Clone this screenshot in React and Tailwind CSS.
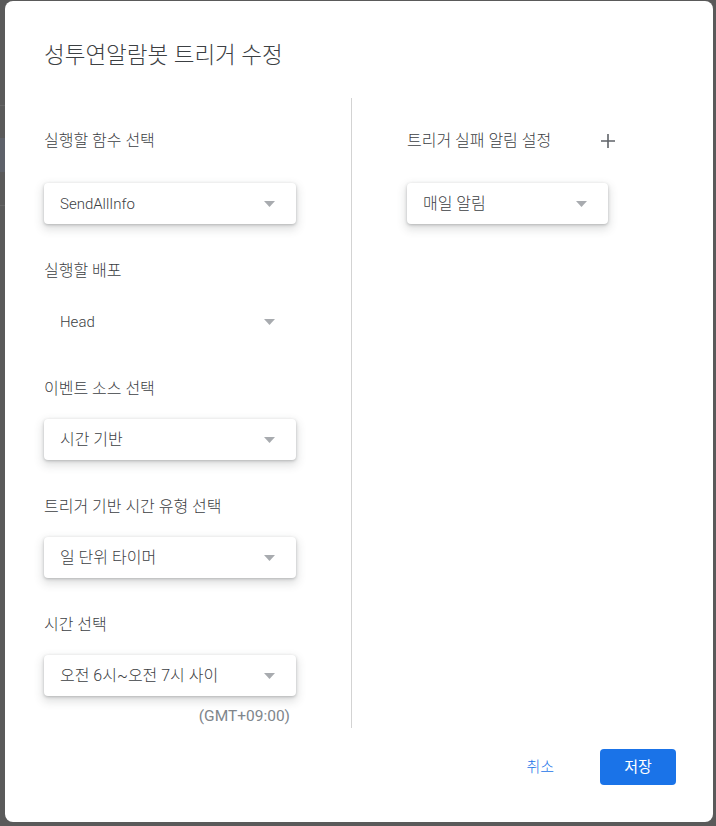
import { useState } from "react";

const font = { fontFamily: 'Roboto, "Noto Sans CJK KR", sans-serif' };

const Arrow = () => (
  <svg width="11" height="6" viewBox="0 0 11 6" className="shrink-0">
    <polygon points="0,0 11,0 5.5,6" fill="#a8abaf" />
  </svg>
);

const Select = ({ value, latin = false, flat = false, width = "w-[252px]" }) => (
  <div
    className={`${width} h-[41px] flex items-center justify-between pl-4 pr-[21px] rounded-[4px] bg-white text-[#3c4043] font-light ${
      latin ? "text-[15px]" : "text-[16px]"
    } ${
      flat
        ? ""
        : "shadow-[0_1px_3px_0_rgba(60,64,67,0.3),0_4px_8px_2px_rgba(60,64,67,0.15)]"
    }`}
  >
    <span className="leading-6">{value}</span>
    <Arrow />
  </div>
);

const Field = ({ label, children }) => (
  <div className="mt-[35px]">
    <div className="h-6 leading-6 text-[16px] font-light text-[#3c4043]">
      {label}
    </div>
    <div className="mt-[18px]">{children}</div>
  </div>
);

export default function App() {
  const [notify] = useState("매일 알림");

  return (
    <div
      className="relative w-[716px] h-[826px] bg-[#5a5a5a] overflow-hidden"
      style={font}
    >
      {/* bits of the page behind the overlay */}
      <div className="absolute left-0 top-[105px] w-[5px] h-px bg-[#666]" />
      <div className="absolute left-0 top-[138px] w-[5px] h-[34px] bg-[#5e626a]" />
      <div className="absolute left-0 top-[205px] w-[5px] h-px bg-[#666]" />

      <div className="absolute left-[5px] top-[1px] w-[708px] h-[821px] bg-white rounded-[8px] flex flex-col pl-[39px] pr-[37px]">
        <h1 className="mt-[38px] h-8 leading-8 text-[22.5px] text-[#3c4043] font-light">
          성투연알람봇 트리거 수정
        </h1>

        <div className="mt-[27px] flex h-[630px]">
          {/* left column */}
          <div className="w-[308px] border-r border-[#d3d3d3] pt-[19px]">
            <div className="h-12 flex items-center text-[16px] font-light text-[#3c4043]">
              실행할 함수 선택
            </div>
            <div className="mt-[18px]">
              <Select value="SendAllInfo" latin />
            </div>

            <Field label="실행할 배포">
              <Select value="Head" latin flat />
            </Field>

            <Field label="이벤트 소스 선택">
              <Select value="시간 기반" />
            </Field>

            <Field label="트리거 기반 시간 유형 선택">
              <Select value="일 단위 타이머" />
            </Field>

            <Field label="시간 선택">
              <Select value="오전 6시~오전 7시 사이" />
            </Field>

            <div className="w-[252px] mt-[10px] h-5 leading-5 pr-[6px] text-right text-[15.5px] text-[#80868b]">
              (GMT+09:00)
            </div>
          </div>

          {/* right column */}
          <div className="pl-[55px] pt-[19px]">
            <div className="w-[221px] h-12 flex items-center justify-between">
              <span className="text-[16px] font-light text-[#3c4043]">
                트리거 실패 알림 설정
              </span>
              <button className="w-10 h-10 flex items-center justify-center rounded-full">
                <svg width="16" height="16" viewBox="0 0 16 16">
                  <path
                    d="M8 1v14M1 8h14"
                    stroke="#5f6368"
                    strokeWidth="1.6"
                    fill="none"
                  />
                </svg>
              </button>
            </div>
            <div className="mt-[18px]">
              <Select value={notify} width="w-[201px]" />
            </div>
          </div>
        </div>

        <div className="mt-[21px] flex justify-end items-center gap-[30px]">
          <button className="h-9 px-4 text-[15px] font-light text-[#1a73e8] rounded-[4px]">
            취소
          </button>
          <button className="h-9 w-[76px] text-[15px] text-white bg-[#1a73e8] rounded-[4px]">
            저장
          </button>
        </div>
      </div>
    </div>
  );
}
